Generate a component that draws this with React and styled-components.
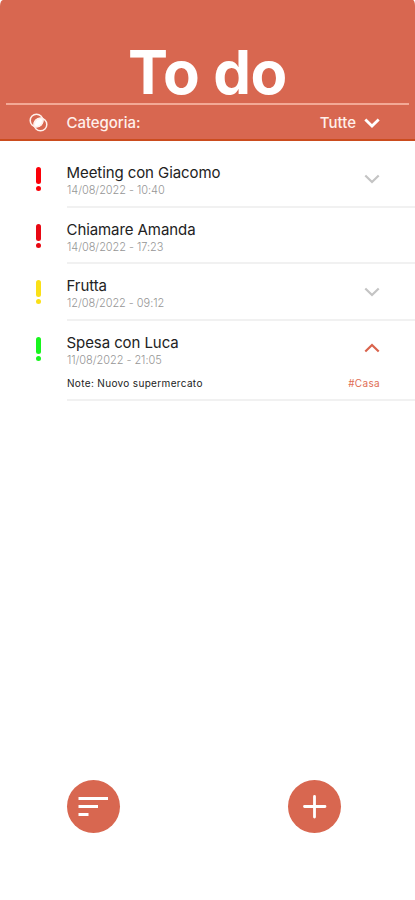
import React from "react";
import styled, { createGlobalStyle } from "styled-components";

const GlobalStyle = createGlobalStyle`
    * { box-sizing: border-box; }

    body {
        margin: 0;
        background: #fff;
        font-family: Inter, "Liberation Sans", sans-serif;
    }
`;

const Screen = styled.div`
    width: 100%;
    height: 900px;
    display: flex;
    flex-direction: column;
    overflow: hidden;
`;

const Header = styled.header`
    height: 141px;
    flex-shrink: 0;
    background: #d86750;
    border-bottom: 2px solid #cb4c1e;
    border-radius: 3px 2px 0 0 / 6px 6px 0 0;
`;

const Title = styled.h1`
    height: 103px;
    margin: 0;
    padding-top: 36px;
    font-size: 60px;
    font-weight: 700;
    line-height: 72px;
    letter-spacing: -0.4px;
    text-align: center;
    color: #fff;
`;

const CategoryBar = styled.div`
    height: 38px;
    margin: 0 6px;
    padding: 0 29px 0 23px;
    display: flex;
    align-items: center;
    border-top: 2px solid #f3a996;
    color: #fff0eb;
    font-size: 15px;
    line-height: 18px;

    svg { display: block; }
    svg:first-child { margin-bottom: 2px; }
`;

const CategoryLabel = styled.span`
    margin-left: 18.5px;
    flex: 1;
    font-weight: 500;
    letter-spacing: -0.05px;
`;

const CategoryValue = styled.span`
    margin-right: 8px;
    font-weight: 500;
`;

const List = styled.main`
    flex: 1;
    padding-top: 10px;
`;

const Item = styled.div`
    height: ${({ $open }) => ($open ? "80.5px" : "56.5px")};
    display: flex;
`;

const Priority = styled.div`
    width: 66.5px;
    padding: 16px 0 0 36px;
    display: flex;
    flex-direction: column;
    align-items: flex-start;
    color: ${({ $color }) => $color};

    &::before {
        content: "";
        width: 5px;
        height: 17px;
        border-radius: 2.5px;
        background: currentColor;
    }

    &::after {
        content: "";
        width: 5px;
        height: 5px;
        margin-top: 2px;
        border-radius: 50%;
        background: currentColor;
    }
`;

const ItemBody = styled.div`
    flex: 1;
    padding: 13.4px 35px 0 0;
    border-bottom: 2px solid #f1f1f1;
`;

const ItemRow = styled.div`
    display: flex;
    justify-content: space-between;

    svg { margin-top: 9.6px; }
`;

const ItemTitle = styled.div`
    font-size: 15px;
    line-height: 18px;
    letter-spacing: -0.08px;
    color: #222;
`;

const ItemDate = styled.div`
    padding-left: 0.5px;
    font-size: 11px;
    font-weight: 300;
    line-height: 16px;
    letter-spacing: -0.05px;
    color: #969696;
`;

const ItemNote = styled.div`
    margin-top: 8.6px;
    padding-left: 0.5px;
    display: flex;
    justify-content: space-between;
    font-size: 10px;
    line-height: 14px;
    letter-spacing: 0.34px;
    color: #222;
`;

const Tag = styled.span`
    color: #df6e55;
`;

const Footer = styled.footer`
    height: 120px;
    padding: 0 74px 0 66.5px;
    display: flex;
    align-items: flex-start;
    justify-content: space-between;
`;

const RoundButton = styled.button`
    width: 53px;
    height: 53px;
    padding: 0;
    border: 0;
    border-radius: 50%;
    background: #d86750;

    svg { display: block; }
`;

const CategoryIcon = () => (
    <svg width="19" height="19" viewBox="0 0 19 19" fill="none" stroke="#fff0eb" strokeWidth="1.5">
        <path d="M13.48 5.52A6.3 6.3 0 0 0 5.52 13.48A6.3 6.3 0 0 0 13.48 5.52Z" fill="#fff" />
        <circle cx="7.5" cy="7.5" r="6.3" />
        <circle cx="11.5" cy="11.5" r="6.3" />
    </svg>
);

const Chevron = ({ color, up, width = 2.2 }) => (
    <svg width="16" height="10" viewBox="0 0 16 10" fill="none" stroke={color} strokeWidth={width}>
        <path d={up ? "M1.3 8.5L8 2L14.7 8.5" : "M1.3 1.5L8 8L14.7 1.5"} />
    </svg>
);

const items = [
    { title: "Meeting con Giacomo", date: "14/08/2022 - 10:40", color: "#fb0008", arrow: true },
    { title: "Chiamare Amanda", date: "14/08/2022 - 17:23", color: "#e80813" },
    { title: "Frutta", date: "12/08/2022 - 09:12", color: "#fae017", arrow: true },
    { title: "Spesa con Luca", date: "11/08/2022 - 21:05", color: "#17f51d", arrow: true, note: "Note: Nuovo supermercato", tag: "#Casa" },
];

const App = () => {

    return (
        <Screen>
            <GlobalStyle />
            <Header>
                <Title>To do</Title>
                <CategoryBar>
                    <CategoryIcon />
                    <CategoryLabel>Categoria:</CategoryLabel>
                    <CategoryValue>Tutte</CategoryValue>
                    <Chevron color="#fff" width={2.8} />
                </CategoryBar>
            </Header>

            <List>
                {items.map((item) => (
                    <Item key={item.title} $open={!!item.note}>
                        <Priority $color={item.color} />
                        <ItemBody>
                            <ItemRow>
                                <div>
                                    <ItemTitle>{item.title}</ItemTitle>
                                    <ItemDate>{item.date}</ItemDate>
                                </div>
                                {item.arrow && <Chevron color={item.note ? "#d9634c" : "#c4c4c4"} up={!!item.note} />}
                            </ItemRow>
                            {item.note && (
                                <ItemNote>
                                    <span>{item.note}</span>
                                    <Tag>{item.tag}</Tag>
                                </ItemNote>
                            )}
                        </ItemBody>
                    </Item>
                ))}
            </List>

            <Footer>
                <RoundButton aria-label="Ordina">
                    <svg width="53" height="53" viewBox="0 0 53 53" stroke="#fff" strokeWidth="3.2">
                        <path d="M11.5 18.5H41M11.5 26.5H31M11.5 34.5H21.5" />
                    </svg>
                </RoundButton>
                <RoundButton aria-label="Aggiungi">
                    <svg width="53" height="53" viewBox="0 0 53 53" stroke="#fff" strokeWidth="2.8" strokeLinecap="round">
                        <path d="M16.5 26.5H37M26.5 16.5V37" />
                    </svg>
                </RoundButton>
            </Footer>
        </Screen>
    )
}

export default App;
